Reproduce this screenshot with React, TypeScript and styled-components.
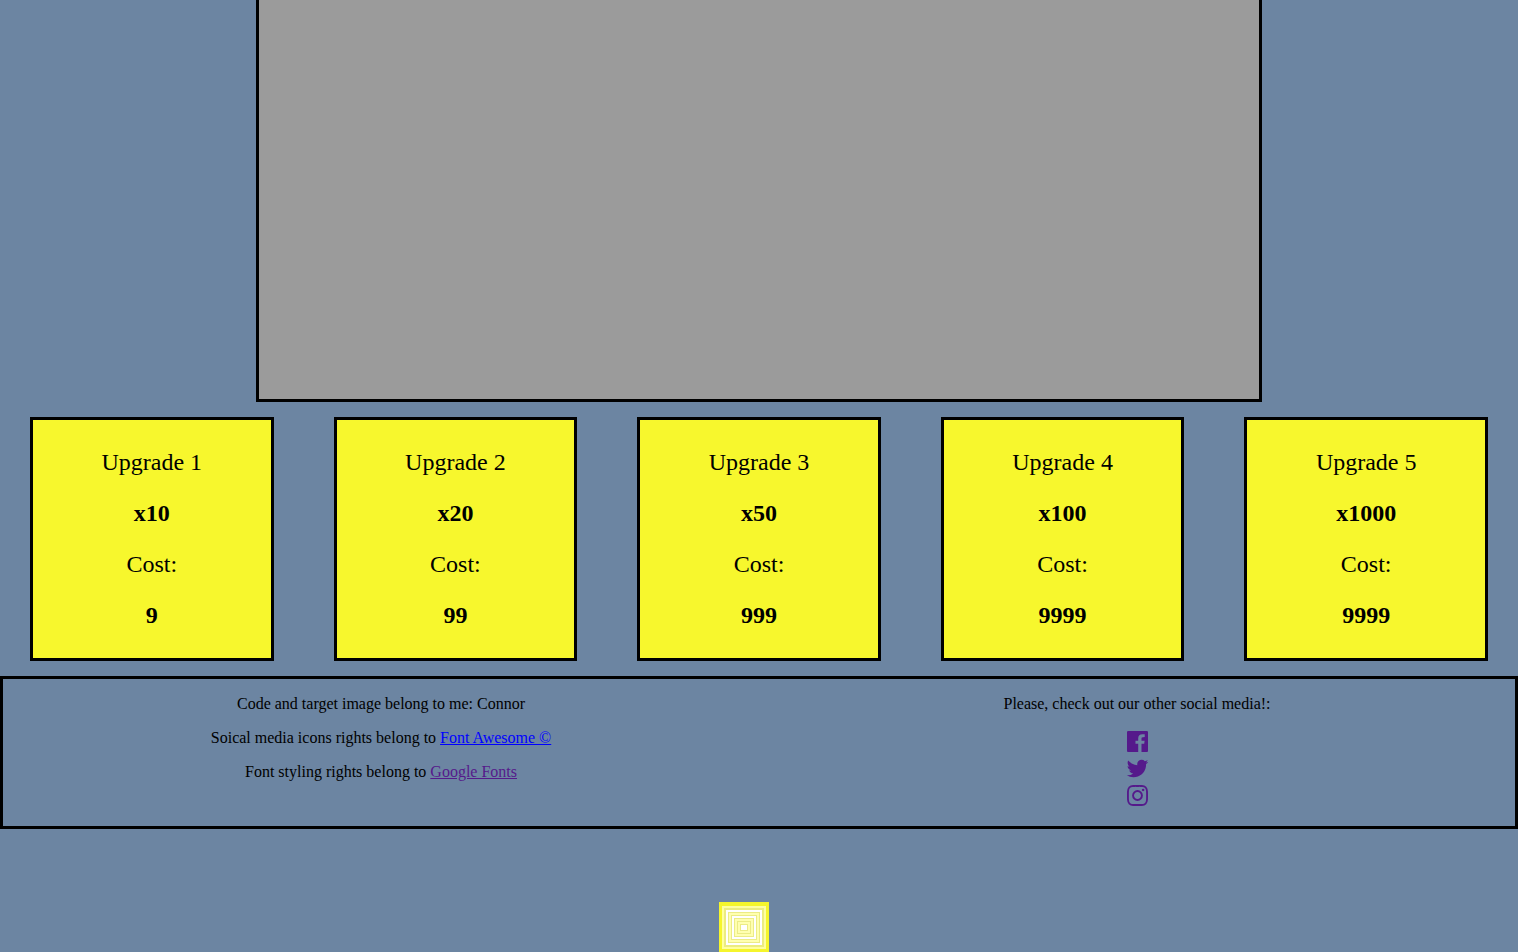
import React from 'react';
import styled, { createGlobalStyle } from 'styled-components';

const GlobalStyle = createGlobalStyle`
  body {
    margin: 0;
    background: #6c85a2;
    color: #000;
    font-family: 'Liberation Serif', 'Times New Roman', serif;
    font-size: 16px;
    line-height: 18px;
    overflow: hidden;
  }
`;

const Page = styled.div`
  display: flex;
  flex-direction: column;
  height: 952px;
`;

const PlayField = styled.main`
  box-sizing: border-box;
  align-self: center;
  width: 1006px;
  height: 402px;
  background: #9b9b9b;
  border: 3px solid #000;
  border-top: 0;
`;

const UpgradeRow = styled.section`
  display: grid;
  grid-template-columns: repeat(5, 1fr);
  column-gap: 60px;
  padding: 15px 30px;
`;

const UpgradeCard = styled.article`
  box-sizing: border-box;
  height: 244px;
  display: flex;
  flex-direction: column;
  justify-content: center;
  gap: 24px;
  background: #f7f72d;
  border: 3px solid #000;
  text-align: center;
  font-size: 24px;
  line-height: 27px;
`;

const CardLine = styled.p<{ $strong?: boolean }>`
  margin: 0;
  font-weight: ${({ $strong }) => ($strong ? 700 : 400)};
`;

const Footer = styled.footer`
  box-sizing: border-box;
  height: 153px;
  display: grid;
  grid-template-columns: 1fr 1fr;
  border: 3px solid #000;
`;

const FooterColumn = styled.div`
  display: flex;
  flex-direction: column;
  align-items: center;
  gap: 16px;
  padding: 16px 0;
`;

const FooterText = styled.p`
  margin: 0;
`;

const FooterLink = styled.a<{ $visited?: boolean }>`
  color: ${({ $visited }) => ($visited ? '#551a8b' : '#0000ff')};
`;

const SocialList = styled.nav`
  display: flex;
  flex-direction: column;
`;

const SocialLink = styled.a`
  display: flex;
  height: 27px;
  color: #551a8b;
`;

const SocialIcon = styled.svg`
  width: 24px;
  height: 24px;
  fill: currentColor;
`;

const TargetRow = styled.div`
  display: flex;
  justify-content: center;
  padding: 73px 30px 0 0;
`;

const TargetImage = styled.svg`
  display: block;
  width: 50px;
  height: 50px;
`;

const upgrades = [
  { name: 'Upgrade 1', factor: 'x10', cost: '9' },
  { name: 'Upgrade 2', factor: 'x20', cost: '99' },
  { name: 'Upgrade 3', factor: 'x50', cost: '999' },
  { name: 'Upgrade 4', factor: 'x100', cost: '9999' },
  { name: 'Upgrade 5', factor: 'x1000', cost: '9999' },
];

const socials = [
  {
    label: 'Facebook',
    d: 'M1579 128q35 0 60 25t25 60v1366q0 35-25 60t-60 25h-391v-595h199l30-232h-229v-148q0-56 23.5-84t91.5-28l122-1v-207q-63-9-178-9-136 0-217.5 80t-81.5 226v171h-200v232h200v595h-735q-35 0-60-25t-25-60v-1366q0-35 25-60t60-25h1366z',
  },
  {
    label: 'Twitter',
    d: 'M1684 408q-67 98-162 167 1 14 1 42 0 130-38 259.5t-115.5 248.5-184.5 210.5-258 146-323 54.5q-271 0-496-145 35 4 78 4 225 0 401-138-105-2-188-64.5t-114-159.5q33 5 61 5 43 0 85-11-112-23-185.5-111.5t-73.5-205.5v-4q68 38 146 41-66-44-105-115t-39-154q0-88 44-163 121 149 294.5 238.5t371.5 99.5q-8-38-8-74 0-134 94.5-228.5t228.5-94.5q140 0 236 102 109-21 205-78-37 115-142 178 93-10 186-50z',
  },
  {
    label: 'Instagram',
    d: 'M1152 896q0-106-75-181t-181-75-181 75-75 181 75 181 181 75 181-75 75-181zm138 0q0 164-115 279t-279 115-279-115-115-279 115-279 279-115 279 115 115 279zm108-410q0 38-27 65t-65 27-65-27-27-65 27-65 65-27 65 27 27 65zm-502-220q-7 0-76.5-.5t-105.5 0-96.5 3-103 10-71.5 18.5q-50 20-88 58t-58 88q-11 29-18.5 71.5t-10 103-3 96.5 0 105.5.5 76.5-.5 76.5 0 105.5 3 96.5 10 103 18.5 71.5q20 50 58 88t88 58q29 11 71.5 18.5t103 10 96.5 3 105.5 0 76.5-.5 76.5.5 105.5 0 96.5-3 103-10 71.5-18.5q50-20 88-58t58-88q11-29 18.5-71.5t10-103 3-96.5 0-105.5-.5-76.5.5-76.5 0-105.5-3-96.5-10-103-18.5-71.5q-20-50-58-88t-88-58q-29-11-71.5-18.5t-103-10-96.5-3-105.5 0-76.5.5zm768 630q0 229-5 317-10 208-124 322t-322 124q-88 5-317 5t-317-5q-208-10-322-124t-124-322q-5-88-5-317t5-317q10-208 124-322t322-124q88-5 317-5t317 5q208 10 322 124t124 322q5 88 5 317z',
  },
];

// Concentric rings, outermost first: left, top, right, bottom, fill.
const rings: [number, number, number, number, string][] = [
  [0, 0, 50, 50, '#f5f52c'],
  [3, 4, 47, 47, '#ffffa0'],
  [5, 6, 45, 45, '#ecec80'],
  [7, 8, 43, 43, '#ffffff'],
  [9, 10, 41, 41, '#ecec86'],
  [10, 11, 40, 40, '#ffffb0'],
  [12, 13, 38, 38, '#ecec86'],
  [13, 14, 37, 37, '#ffffff'],
  [15, 16, 35, 35, '#ecec86'],
  [16, 17, 34, 34, '#ffffb0'],
  [18, 19, 32, 32, '#ecec86'],
  [19, 20, 31, 31, '#ffffb0'],
  [21, 22, 29, 29, '#ecec86'],
  [22, 23, 28, 28, '#ffffff'],
];

export default function App() {
  return (
    <Page>
      <GlobalStyle />
      <PlayField />
      <UpgradeRow>
        {upgrades.map((u) => (
          <UpgradeCard key={u.name}>
            <CardLine>{u.name}</CardLine>
            <CardLine $strong>{u.factor}</CardLine>
            <CardLine>Cost:</CardLine>
            <CardLine $strong>{u.cost}</CardLine>
          </UpgradeCard>
        ))}
      </UpgradeRow>
      <Footer>
        <FooterColumn>
          <FooterText>Code and target image belong to me: Connor</FooterText>
          <FooterText>
            Soical media icons rights belong to <FooterLink href="#">Font Awesome ©</FooterLink>
          </FooterText>
          <FooterText>
            Font styling rights belong to <FooterLink href="#" $visited>Google Fonts</FooterLink>
          </FooterText>
        </FooterColumn>
        <FooterColumn>
          <FooterText>Please, check out our other social media!:</FooterText>
          <SocialList>
            {socials.map((s) => (
              <SocialLink key={s.label} href="#" aria-label={s.label}>
                <SocialIcon viewBox="-18 -18 1755 1755">
                  <path d={s.d} />
                </SocialIcon>
              </SocialLink>
            ))}
          </SocialList>
        </FooterColumn>
      </Footer>
      <TargetRow>
        <TargetImage viewBox="0 0 50 50" shapeRendering="crispEdges">
          {rings.map(([l, t, r, b, fill]) => (
            <rect key={l} x={l} y={t} width={r - l} height={b - t} fill={fill} />
          ))}
        </TargetImage>
      </TargetRow>
    </Page>
  );
}
